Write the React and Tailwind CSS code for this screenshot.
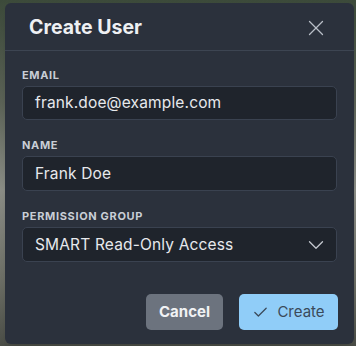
import React from 'react';
import { X, ChevronDown, Check } from 'lucide-react';

const Field = ({ label, children }) => (
    <div className="flex flex-col">
        <label className="text-[11px] leading-[14px] font-bold tracking-[0.06em] text-[#c9ced6] uppercase mb-[4px]">{label}</label>
        {children}
    </div>
);

export default function App() {
    return (
        <div
            className="w-[356px] h-[346px] pt-[3px] pl-[5px] bg-[linear-gradient(180deg,#3c4a3a_0%,#5d6458_30%,#8d8f88_55%,#6f7168_80%,#4c4f48_100%)]"
            style={{ fontFamily: 'Inter, "Open Sans", sans-serif' }}
        >
            <div className="w-[349px] h-[341px] bg-[#2b313c] rounded-[6px] flex flex-col shadow-lg">
                {/* header */}
                <div className="h-[48px] flex items-center justify-between pl-[24px] pr-[25px] pt-[2px] border-b border-[#3d4552]">
                    <h2 className="text-[19.5px] font-bold text-[#eef0f3]">Create User</h2>
                    <X size={26} strokeWidth={1.2} className="text-[#b9bec7]" />
                </div>

                {/* body */}
                <div className="flex flex-col gap-[18px] px-[17px] pt-[17px]">
                    <Field label="Email">
                        <div className="h-[34px] rounded-[5px] border border-[#3a4250] bg-[#1f242c] flex items-center px-[12px] text-[15.5px] tracking-[0.01em] text-[#e7e9ec]">
                            frank.doe@example.com
                        </div>
                    </Field>
                    <Field label="Name">
                        <div className="h-[35px] rounded-[5px] border border-[#3a4250] bg-[#1f242c] flex items-center px-[12px] text-[15.5px] tracking-[0.01em] text-[#e7e9ec]">
                            Frank Doe
                        </div>
                    </Field>
                    <Field label="Permission Group">
                        <div className="h-[35px] rounded-[5px] border border-[#3a4250] bg-[#1f242c] flex items-center justify-between pl-[12px] pr-[13px] text-[15.5px] tracking-[0.01em] text-[#e7e9ec]">
                            <span>SMART Read-Only Access</span>
                            <ChevronDown size={26} strokeWidth={1.2} className="text-[#c4c8cf] -mr-[6px]" />
                        </div>
                    </Field>
                </div>

                {/* footer */}
                <div className="flex justify-end gap-[16px] px-[16px] mt-auto pb-[14px]">
                    <button className="h-[36px] w-[77px] rounded-[5px] bg-[#6c737e] text-[15px] font-bold text-[#f1f2f4]">
                        Cancel
                    </button>
                    <button className="h-[36px] w-[99px] rounded-[5px] bg-[#90cdf8] text-[15px] text-[#3b4a5a] flex items-center justify-center gap-[8px]">
                        <Check size={17} strokeWidth={1.8} />
                        Create
                    </button>
                </div>
            </div>
        </div>
    );
}
